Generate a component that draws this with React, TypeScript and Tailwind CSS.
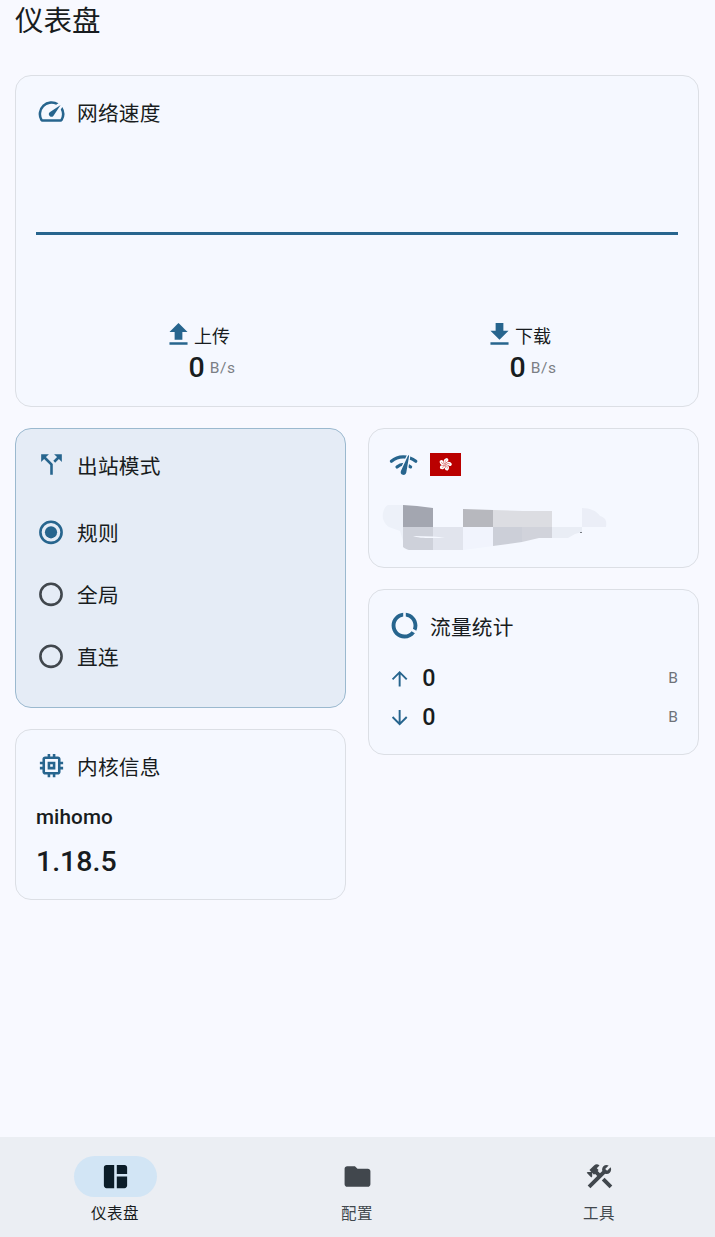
import clsx from 'clsx';
import * as React from 'react';
import {
  MdArrowDownward,
  MdArrowUpward,
  MdCallSplit,
  MdConstruction,
  MdDataUsage,
  MdDownload,
  MdFolder,
  MdMemory,
  MdSpaceDashboard,
  MdSpeed,
  MdUpload,
} from 'react-icons/md';

const modes = ['规则', '全局', '直连'];

const tabs = [
  { label: '仪表盘', icon: MdSpaceDashboard },
  { label: '配置', icon: MdFolder },
  { label: '工具', icon: MdConstruction },
];

export default function App() {
  const [mode, setMode] = React.useState('规则');
  const [tab, setTab] = React.useState('仪表盘');

  return (
    <div className="flex h-screen flex-col bg-[#f8f9ff] font-['Roboto','Noto_Sans_CJK_SC',sans-serif] text-[#181c20]">
      <h1 className="h-[75px] pt-[2px] pl-[15px] text-[28.5px] leading-[40px]">仪表盘</h1>
      <main className="flex-1 pr-4 pl-[15px]">
        <Card className="h-[332px]">
          <CardTitle icon={<MdSpeed />} title="网络速度" />
          <div className="mx-5 mt-[105px] h-[3px] bg-[#27658e]" />
          <div className="mt-[84px] flex px-5">
            <Speed icon={<MdUpload />} label="上传" />
            <Speed icon={<MdDownload />} label="下载" />
          </div>
        </Card>

        <div className="mt-[21px] grid grid-cols-[331px_331px] items-start gap-[22px]">
          <div className="space-y-[21px]">
            <Card active className="h-[280px]">
              <CardTitle icon={<MdCallSplit />} title="出站模式" />
              <div className="mt-[21px]">
                {modes.map((name) => (
                  <ModeOption
                    key={name}
                    name={name}
                    selected={name === mode}
                    onSelect={() => setMode(name)}
                  />
                ))}
              </div>
            </Card>
            <Card className="h-[171px]">
              <CardTitle icon={<MdMemory />} title="内核信息" />
              <p className="mt-[22px] pl-5 text-[20.7px] leading-[28px] font-medium tracking-[0.1px]">mihomo</p>
              <p className="mt-[13px] pl-5 text-[28.5px] leading-[36px] font-medium">1.18.5</p>
            </Card>
          </div>

          <div className="space-y-[21px]">
            <Card className="h-[140px]">
              <div className="mt-5 flex h-[31px] items-center pl-[19px]">
                <NetworkCheck />
                <HongKongFlag />
              </div>
              <CensoredAddress />
            </Card>
            <Card className="h-[166px]">
              <CardTitle icon={<MdDataUsage />} title="流量统计" />
              <div className="mt-[18px]">
                <Traffic icon={<MdArrowUpward />} />
                <Traffic icon={<MdArrowDownward />} />
              </div>
            </Card>
          </div>
        </div>
      </main>

      <nav className="grid h-[100px] grid-cols-[230px_254px_230px] bg-[#ebeef3] pt-[19px]">
        {tabs.map(({ label, icon: Icon }) => (
          <button
            key={label}
            className={clsx(
              'flex flex-col items-center',
              label === tab ? 'text-[#181c20]' : 'text-[#41474d]'
            )}
            onClick={() => setTab(label)}
          >
            <span
              className={clsx(
                'flex h-[41px] w-[83px] items-center justify-center rounded-full',
                label === tab && 'bg-[#d2e5f5] text-[#0b1d29]'
              )}
            >
              <Icon className="mb-px text-[31px]" />
            </span>
            <span className="mt-[7px] text-[15.5px] leading-5 tracking-[0.5px]">{label}</span>
          </button>
        ))}
      </nav>
    </div>
  );
}

function Card(props: { active?: boolean; className?: string; children: React.ReactNode }) {
  return (
    <section
      className={clsx(
        'overflow-hidden rounded-2xl border',
        props.active ? 'border-[#9bb9cf] bg-[#e5ecf6]' : 'border-[#dcdfe5] bg-[#f5f8ff]',
        props.className
      )}
    >
      {props.children}
    </section>
  );
}

function CardTitle({ icon, title }: { icon: React.ReactNode; title: string }) {
  return (
    <div className="mt-5 flex h-[31px] items-center pl-[19.5px]">
      <span className="text-[31px] text-[#27658e]">{icon}</span>
      <h2 className="ml-[10.5px] pt-[7px] text-[20.7px] tracking-[0.2px]">{title}</h2>
    </div>
  );
}

function Speed({ icon, label }: { icon: React.ReactNode; label: string }) {
  return (
    <div className="flex flex-1 flex-col items-center">
      <div className="flex h-[31px] items-center">
        <span className="text-[31px] text-[#27658e]">{icon}</span>
        <span className="pt-[3px] text-[18px]">{label}</span>
      </div>
      <div className="flex h-[36px] items-center pl-[31px]">
        <span className="text-[28.5px] leading-[36px] font-medium">0</span>
        <span className="ml-[5px] pt-px text-[15.5px] tracking-[0.6px] text-[#7b7f85]">B/s</span>
      </div>
    </div>
  );
}

function ModeOption(props: { name: string; selected: boolean; onSelect(): void }) {
  return (
    <button className="flex h-[62px] w-full items-center pl-[23px]" onClick={props.onSelect}>
      <svg
        className={clsx('size-6 overflow-visible', props.selected ? 'text-[#27658e]' : 'text-[#41474d]')}
        viewBox="0 0 24 24"
      >
        <circle cx="12" cy="12.3" r="10.6" fill="none" stroke="currentColor" strokeWidth="2.6" />
        {props.selected && <circle cx="12" cy="12.3" r="6.1" fill="currentColor" />}
      </svg>
      <span className="ml-[14px] pt-[5px] text-[20.7px] tracking-[0.2px]">{props.name}</span>
    </button>
  );
}

function Traffic({ icon }: { icon: React.ReactNode }) {
  return (
    <div className="flex h-[39px] items-center pr-5 pl-[19px]">
      <span className="text-[23.3px] text-[#27658e]">{icon}</span>
      <span className="ml-[11px] text-[23.3px] font-medium">0</span>
      <span className="ml-auto pt-px text-[15.5px] text-[#6f7379]">B</span>
    </div>
  );
}

function NetworkCheck() {
  return (
    <svg className="size-[31px] text-[#27658e]" viewBox="0 0 31 31">
      <g fill="none" stroke="currentColor" strokeWidth="3.2" strokeLinecap="round">
        <path d="M3.400 12.300C10 6.700 20 6.200 27.800 12.300" />
        <path d="M9 18c4.200-3.500 9.400-3.600 13.600-.1" />
      </g>
      <path
        fill="currentColor"
        stroke="#f5f8ff"
        strokeWidth="2.6"
        paintOrder="stroke"
        d="M20.200 6.200c.5-.2 1 .1.900.700L18.300 23.500c-.4 2-2 2.800-3.600 2.300-1.700-.5-2.400-2.100-1.800-3.900z"
      />
    </svg>
  );
}

function HongKongFlag() {
  return (
    <svg className="ml-[11px] h-[23px] w-[31px]" viewBox="0 0 31 23">
      <path fill="#ba0000" d="M0 0h31v23H0z" />
      {[0, 72, 144, 216, 288].map((angle) => (
        <g key={angle} transform={`translate(15.3 11.4) rotate(${angle + 12})`}>
          <path fill="#fff" d="M0 0C-3-1.5-3.2-5.2.2-6.6 2.8-5.8 2.6-3.6 1-2.6 0-1.8.1-1 0 0z" />
          <path fill="none" stroke="#ba0000" strokeWidth=".4" d="M-.2-1C-1-2.4-.8-3.6.1-4.5" />
        </g>
      ))}
    </svg>
  );
}

function CensoredAddress() {
  return (
    <svg className="mt-[18px] ml-[12px] h-[52px] w-[240px]" viewBox="0 0 240 52">
      <path fill="#edf1f9" d="M22 7H7C3 9 1 15 2 21c2 5 4 7 6 8l11 4 3 10z" />
      <path fill="#a3a6b0" d="M22 7l14 1 16 2v19H22z" />
      <path fill="#b7b8be" d="M82 11l30 1v17H82z" />
      <path fill="#dcdde2" d="M112 12l30 1h29v16h-59z" />
      <path fill="#ebeef7" d="M201 10c8 0 15 3 18 8 6 2 7 5 6 11h-24z" />
      <path fill="#ced1da" d="M22 29h30v24c-12 1-24 1-30-4z" />
      <path fill="#e1e4ed" d="M52 29h30v23l-30 1z" />
      <path fill="#f1f4fd" d="M82 29h30v19l-30 4z" />
      <path fill="#cccfd8" d="M112 29h29v15l-29 4z" />
      <path fill="#d1d3db" d="M141 29h30v11h-13l-17 4z" />
      <path fill="#e9edf5" d="M171 29h30v5l-7 2-7 4h-16z" />
      <path fill="#f5f8ff" d="M32 38l20 .5 12 1c-11 1-26 1-32-1.5z" />
      <path fill="#777b82" d="M199 34h2v1h-2z" />
    </svg>
  );
}
